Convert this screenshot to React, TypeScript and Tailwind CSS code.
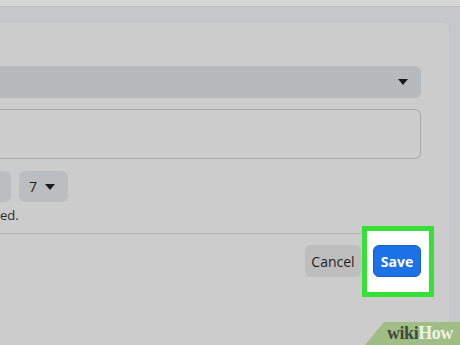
import React from 'react';

function Caret() {
  return (
    <svg width="10" height="6" viewBox="0 0 10 6" className="shrink-0">
      <path d="M0 0h10L5 6z" fill="#1b1b1b" />
    </svg>
  );
}

export default function App() {
  return (
    <div className="relative w-[460px] h-[345px] overflow-hidden bg-[#c5c7c9] font-['Open_Sans','Noto_Sans',sans-serif]">
      <div className="h-[7px] bg-[#d6d6d6] border-b border-[#bdbfc1]" />
      <div className="pt-[14px] flex">
        <div className="w-[450px] h-[324px] bg-[#cccccc] rounded-tr-lg border-t border-r border-[#c1c3c5] pr-[28px] pt-[44px]">
          <div className="h-[32px] bg-[#b8b9bb] rounded-r-md flex items-center justify-end pr-[13px]">
            <Caret />
          </div>
          <div className="mt-[11px] h-[50px] border border-l-0 border-[#a9a9a9] rounded-r-md" />
          <div className="mt-[12px] flex gap-[8px]">
            <div className="w-[11px] h-[31px] bg-[#bcbdbf] rounded-r-md" />
            <div className="w-[49px] h-[31px] bg-[#bcbdbf] rounded-md flex items-center gap-[8px] pl-[10px] text-[14px] text-[#1e1e1e]">
              <span>7</span>
              <Caret />
            </div>
          </div>
          <div className="mt-[4px] text-[13px] leading-[18px] text-[#2a2a2a]">ed.</div>
          <div className="mt-[9px] h-px bg-[#b3b3b3]" />
          <div className="mt-[11px] flex justify-end gap-[12px]">
            <button className="h-[32px] w-[56px] rounded-md bg-[#bebebe] text-[14px] text-[#1e1e1e]">Cancel</button>
            <div className="relative">
              <div className="absolute -left-[11px] -right-[13px] -top-[19px] -bottom-[20px] border-[5px] border-[#37e036] bg-white" />
              <button className="relative h-[32px] w-[48px] rounded-md bg-[#1b72e6] border border-[#1a5fc0] text-[14px] font-bold text-white">Save</button>
            </div>
          </div>
        </div>
      </div>
      <div className="absolute right-0 bottom-0 w-[95px] h-[23px]">
        <svg width="95" height="23" viewBox="0 0 95 23" className="absolute inset-0">
          <polygon points="19,0 95,0 95,23 0,23" fill="#a0bd86" />
        </svg>
        <div className="absolute left-[22px] top-0 text-[18px] leading-[22px] font-bold font-['Liberation_Serif',serif] tracking-tight">
          <span className="text-[#3e4a3c]">wiki</span>
          <span className="text-[#eef3e8]">How</span>
        </div>
      </div>
    </div>
  );
}
